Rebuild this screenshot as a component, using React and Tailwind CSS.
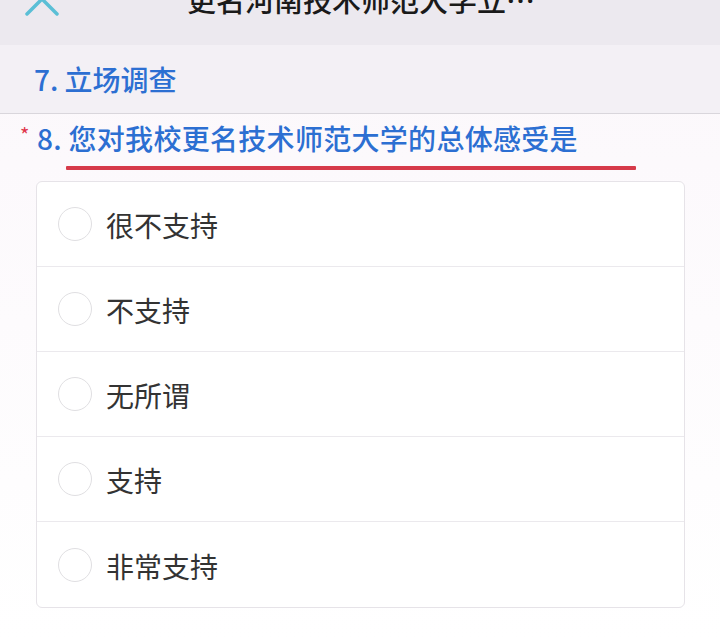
import React from "react";

const options = ["很不支持", "不支持", "无所谓", "支持", "非常支持"];

export default function App() {
  const font = { fontFamily: '"Noto Sans CJK SC", "Noto Sans", sans-serif' };
  return (
    <div className="w-[720px] h-[640px] overflow-hidden bg-gradient-to-b from-[#fbf7fb] to-white" style={font}>
      {/* header */}
      <div className="h-[45px] overflow-hidden bg-[#ece9ef]">
        <div className="-mt-[24px] h-[44px] flex items-center">
          <div className="w-[84px] pl-[24px] flex items-center">
            <svg width="36" height="36" viewBox="0 0 36 36" className="translate-y-[1px]">
              <path d="M3 3 L33 33 M33 3 L3 33" stroke="#5bbfd6" strokeWidth="3.5" strokeLinecap="round" fill="none" />
            </svg>
          </div>
          <div className="flex-1 text-center text-[29px] text-[#1a1a1a] font-medium whitespace-nowrap pl-[2px] translate-y-[2px]">
            更名河南技术师范大学立…
          </div>
          <div className="w-[84px] flex items-center justify-end pr-[15px] gap-[6px] translate-y-[-4px]">
            <span className="w-[9px] h-[9px] rounded-full bg-[#111]" />
            <span className="w-[9px] h-[9px] rounded-full bg-[#111]" />
            <span className="w-[9px] h-[9px] rounded-full bg-[#111]" />
          </div>
        </div>
      </div>

      {/* section 7 */}
      <div className="h-[69px] bg-[#f3f0f5] border-b border-[#d9d6dc] flex items-center pl-[34px]">
        <span className="text-[28px] text-[#2c6fd2] font-medium">7. 立场调查</span>
      </div>

      {/* question 8 */}
      <div className="pt-[6px]">
        <div className="flex items-center h-[36px]">
          <span className="w-[37px] pl-[20px] text-[20px] leading-none text-[#e0354a] -translate-y-[3px]">*</span>
          <span className="text-[28px] text-[#2c6fd2] font-medium tracking-[0.3px] whitespace-nowrap">
            8. 您对我校更名技术师范大学的总体感受是
          </span>
        </div>
        <div className="ml-[66px] mt-[10px] w-[570px] h-[4px] bg-[#d63a4a] rounded-[1px]" />
        <div className="ml-[36px] mt-[11px] w-[649px] border border-[#e6e3e8] rounded-[6px] bg-white">
          {options.map((o, i) => (
            <div
              key={o}
              className={`h-[85px] flex items-center pl-[21px] ${i < options.length - 1 ? "border-b border-[#ebe9ed]" : ""}`}
            >
              <span className="w-[34px] h-[34px] rounded-full border-[1.5px] border-[#e0dfe2] bg-white shrink-0" />
              <span className="ml-[14px] text-[28px] text-[#333333] translate-y-[1px]">{o}</span>
            </div>
          ))}
        </div>
      </div>
    </div>
  );
}
